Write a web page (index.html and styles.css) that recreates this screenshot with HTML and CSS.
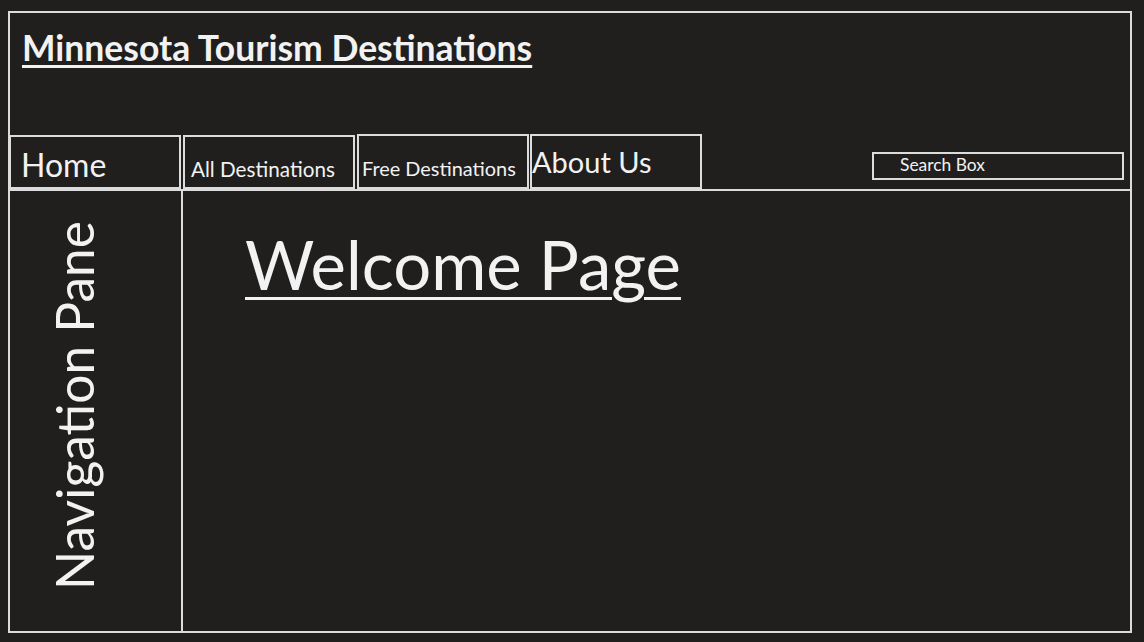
FILE: index.html
```html
<!DOCTYPE html>
<html lang="en">
<head>
<meta charset="utf-8">
<title>Minnesota Tourism Destinations</title>
<link rel="stylesheet" href="styles.css">
</head>
<body>
<div class="frame">
  <header class="header">
    <h1 class="title">Minnesota Tourism Destinations</h1>
  </header>
  <nav class="navrow">
    <a class="tab tab-home">Home</a>
    <a class="tab tab-all">All Destinations</a>
    <a class="tab tab-free">Free Destinations</a>
    <a class="tab tab-about">About Us</a>
    <div class="spacer"></div>
    <div class="search">Search Box</div>
  </nav>
  <div class="bodyrow">
    <aside class="navpane"><span class="navpane-text">Navigation Pane</span></aside>
    <main class="main">
      <h2 class="welcome">Welcome Page</h2>
    </main>
  </div>
</div>
</body>
</html>
```
FILE: styles.css
```css
html, body {
  margin: 0;
  padding: 0;
  background: #201f1e;
}
body {
  width: 1144px;
  height: 642px;
  overflow: hidden;
  font-family: Lato, "Open Sans", sans-serif;
  color: #efefef;
}
.frame {
  box-sizing: border-box;
  margin: 11px 0 0 8px;
  width: 1124px;
  height: 622px;
  border: 2px solid #dcdcdc;
  display: flex;
  flex-direction: column;
}
.header {
  height: 121px;
  padding: 17px 0 0 12px;
  box-sizing: border-box;
}
.title {
  margin: 0;
  font-size: 35.5px;
  font-weight: 700;
  line-height: 36px;
  text-decoration: underline;
  text-decoration-thickness: 3px;
  text-underline-offset: 4px;
  color: #f2f2f2;
}
.navrow {
  display: flex;
  align-items: flex-end;
  height: 55px;
}
.tab {
  box-sizing: border-box;
  width: 172px;
  height: 54px;
  border: 2px solid #dcdcdc;
  display: flex;
  line-height: 1.2;
  color: #f2f2f2;
}
.tab-home {
  margin-left: -1px;
  font-size: 32px;
  padding: 9px 0 0 10px;
}
.tab-all {
  margin-left: 2px;
  font-size: 20.7px;
  padding: 20px 0 0 6px;
}
.tab-free {
  margin-left: 2px;
  height: 55px;
  font-size: 19.9px;
  padding: 21px 0 0 3px;
}
.tab-about {
  margin-left: 1px;
  height: 55px;
  font-size: 29px;
  padding: 9px 0 0 0;
}
.spacer {
  flex: 1;
}
.search {
  box-sizing: border-box;
  align-self: flex-start;
  margin: 18px 6px 0 0;
  width: 252px;
  height: 28px;
  border: 2px solid #dcdcdc;
  padding: 1px 0 0 26px;
  font-size: 17.4px;
  line-height: 19px;
  color: #f2f2f2;
}
.bodyrow {
  flex: 1;
  display: flex;
  border-top: 2px solid #dcdcdc;
}
.navpane {
  box-sizing: border-box;
  width: 173px;
  border-right: 2px solid #dcdcdc;
  display: flex;
  align-items: flex-start;
  justify-content: flex-start;
  padding: 30px 0 0 36px;
}
.navpane-text {
  writing-mode: vertical-rl;
  transform: rotate(180deg);
  font-size: 51.5px;
  line-height: 56px;
  color: #f2f2f2;
}
.main {
  flex: 1;
  padding: 35px 0 0 62px;
}
.welcome {
  margin: 0;
  font-size: 67px;
  font-weight: 400;
  line-height: 76px;
  text-decoration: underline;
  text-decoration-thickness: 3px;
  text-underline-offset: 7px;
  color: #f2f2f2;
}
```
